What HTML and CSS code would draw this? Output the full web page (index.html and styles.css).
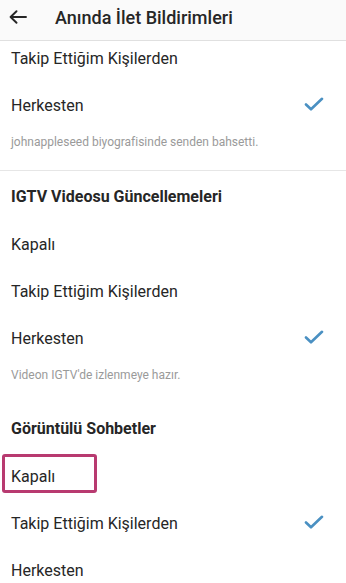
FILE: index.html
```html
<!DOCTYPE html>
<html lang="tr">
<head>
<meta charset="utf-8">
<title>Anında İlet Bildirimleri</title>
<link rel="stylesheet" href="styles.css">
</head>
<body>
<header class="topbar">
  <svg class="back" width="18" height="14" viewBox="0 0 18 14" aria-hidden="true">
    <path d="M17 7H2M7.5 1.2L1.6 7l5.9 5.8" fill="none" stroke="#262626" stroke-width="1.9" stroke-linecap="round" stroke-linejoin="round"/>
  </svg>
  <h1 class="title">Anında İlet Bildirimleri</h1>
</header>
<main class="list">
  <section class="group group-divided">
    <div class="row">Takip Ettiğim Kişilerden</div>
    <div class="row">Herkesten
      <svg class="check" width="20" height="14" viewBox="0 0 20 14" aria-hidden="true"><path d="M2 7.5l5 4.8L18 1.8" fill="none" stroke="#4a90c2" stroke-width="2.6" stroke-linecap="round" stroke-linejoin="round"/></svg>
    </div>
    <p class="caption">johnappleseed biyografisinde senden bahsetti.</p>
  </section>
  <section class="group">
    <h2 class="heading">IGTV Videosu Güncellemeleri</h2>
    <div class="row">Kapalı</div>
    <div class="row">Takip Ettiğim Kişilerden</div>
    <div class="row">Herkesten
      <svg class="check" width="20" height="14" viewBox="0 0 20 14" aria-hidden="true"><path d="M2 7.5l5 4.8L18 1.8" fill="none" stroke="#4a90c2" stroke-width="2.6" stroke-linecap="round" stroke-linejoin="round"/></svg>
    </div>
    <p class="caption">Videon IGTV'de izlenmeye hazır.</p>
  </section>
  <section class="group">
    <h2 class="heading">Görüntülü Sohbetler</h2>
    <div class="row row-marked">Kapalı<span class="mark"></span></div>
    <div class="row">Takip Ettiğim Kişilerden
      <svg class="check" width="20" height="14" viewBox="0 0 20 14" aria-hidden="true"><path d="M2 7.5l5 4.8L18 1.8" fill="none" stroke="#4a90c2" stroke-width="2.6" stroke-linecap="round" stroke-linejoin="round"/></svg>
    </div>
    <div class="row">Herkesten</div>
  </section>
</main>
</body>
</html>
```
FILE: styles.css
```css
html, body {
  margin: 0;
  padding: 0;
}
body {
  width: 346px;
  height: 583px;
  overflow: hidden;
  background: #ffffff;
  font-family: Roboto, "Noto Sans", "Liberation Sans", sans-serif;
  color: #262626;
}
.topbar {
  position: relative;
  z-index: 2;
  height: 40px;
  display: flex;
  align-items: center;
  background: #fafafa;
  border-bottom: 1px solid #e0e0e0;
  padding-left: 9px;
}
.back {
  flex: none;
  margin-top: -6px;
}
.title {
  margin: 0 0 0 28px;
  margin-top: -5px;
  font-size: 18px;
  font-weight: 500;
  color: #262626;
}
.list {
  margin-top: -6px;
}
.group-divided {
  border-bottom: 1px solid #e6e6e6;
}
.row {
  position: relative;
  height: 47px;
  display: flex;
  align-items: center;
  justify-content: space-between;
  padding: 0 22px 0 11px;
  font-size: 16px;
}
.check {
  margin-top: -3px;
}
.caption {
  margin: 0;
  padding: 5px 11px 20px;
  font-size: 12px;
  line-height: 16px;
  color: #9a9a9a;
}
.heading {
  margin: 0;
  height: 50px;
  display: flex;
  align-items: center;
  padding: 0 11px;
  font-size: 16px;
  font-weight: 700;
  color: #262626;
}
.mark {
  position: absolute;
  left: 2px;
  top: 1px;
  width: 95px;
  height: 39px;
  box-sizing: border-box;
  border: 3px solid #b83a70;
  border-radius: 3px;
}
```
